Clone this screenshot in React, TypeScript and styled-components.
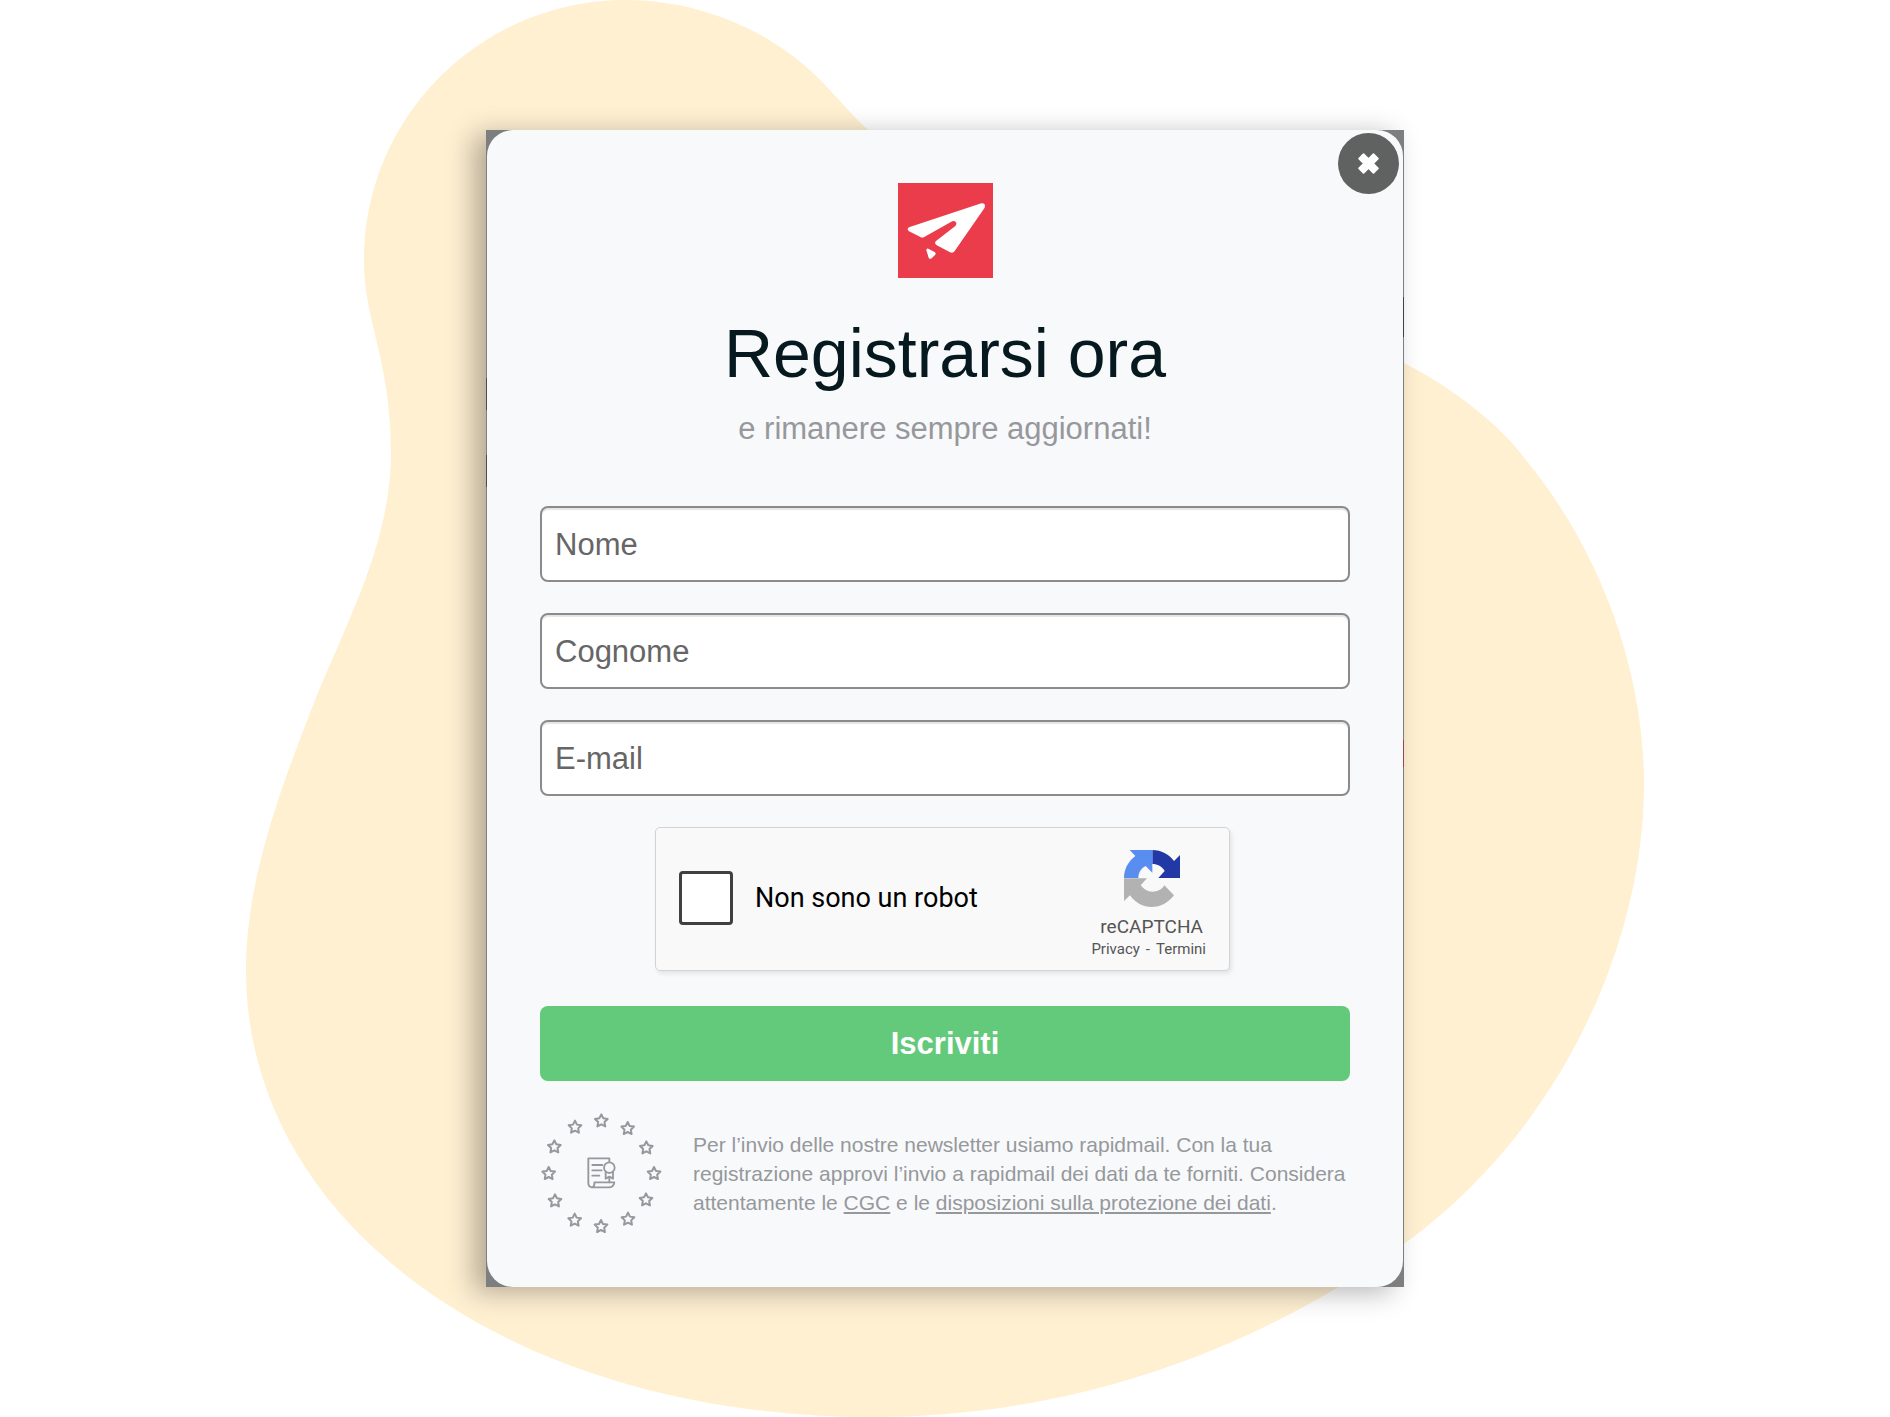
import React from "react";
import styled, { createGlobalStyle } from "styled-components";

const sans = '"Liberation Sans", Arial, Helvetica, sans-serif';
const roboto = 'Roboto, "Liberation Sans", sans-serif';
const muted = "#96989b";

const GlobalStyle = createGlobalStyle`
  *, *::before, *::after { box-sizing: border-box; }
  body { margin: 0; background: #ffffff; font-family: ${sans}; }
`;

const Page = styled.main`
  position: relative;
  display: flex;
  align-items: center;
  justify-content: center;
  min-height: 100vh;
  padding: 24px;
  overflow: hidden;
`;

const Backdrop = styled.svg`
  position: absolute;
  inset: 0;
  width: 100%;
  height: 100%;
`;

const Frame = styled.div`
  position: relative;
  width: 100%;
  max-width: 918px;
  padding: 0 1px;
  background:
    linear-gradient(#3c4245, #3c4245) right 0 top 167px / 1px 40px no-repeat,
    linear-gradient(#9a4650, #9a4650) right 0 top 610px / 1px 27px no-repeat,
    linear-gradient(#4a4c4e, #4a4c4e) left 0 top 248px / 1px 32px no-repeat,
    linear-gradient(#4a4c4e, #4a4c4e) left 0 top 325px / 1px 32px no-repeat,
    #7c7e80;
  box-shadow: -12px 5px 26px rgba(0, 0, 0, 0.3);
`;

const Card = styled.section`
  position: relative;
  display: flex;
  flex-direction: column;
  align-items: center;
  padding: 53px 53px 52px;
  border-radius: 26px;
  background: #f8f9fb;
`;

const CloseButton = styled.button`
  position: absolute;
  top: 3px;
  right: 4px;
  display: flex;
  align-items: center;
  justify-content: center;
  width: 61px;
  height: 61px;
  padding: 0 0 1px;
  border: 0;
  border-radius: 50%;
  background: #606261;
  cursor: pointer;
`;

const Logo = styled.svg`
  width: 95px;
  height: 95px;
`;

const Title = styled.h1`
  margin: 35px 0 0;
  color: #05191e;
  font-size: 68px;
  font-weight: 400;
  line-height: 80px;
  text-align: center;
`;

const Subtitle = styled.p`
  margin: 16px 0 0;
  color: ${muted};
  font-size: 31px;
  line-height: 40px;
  text-align: center;
`;

const Form = styled.form`
  display: flex;
  flex-direction: column;
  gap: 31px;
  width: 100%;
  margin-top: 57px;
`;

const Field = styled.input`
  width: 100%;
  height: 76px;
  padding: 2px 13px 0;
  border: 2px solid #8b8b8b;
  border-radius: 8px;
  background: #ffffff;
  box-shadow: inset 0 2px 1px rgba(0, 0, 0, 0.1);
  color: #333333;
  font-family: ${sans};
  font-size: 31px;
  outline: none;

  &::placeholder {
    color: #666666;
    opacity: 1;
  }
`;

const CaptchaSlot = styled.div`
  width: 100%;
  max-width: 580px;
  margin: 0 auto 4px;
  padding-right: 5px;
`;

const Captcha = styled.div`
  display: flex;
  align-items: center;
  justify-content: space-between;
  height: 144px;
  padding: 0 17px 0 23px;
  border: 1px solid #d3d3d3;
  border-radius: 5px;
  background: #f9f9f9;
  box-shadow: 2px 3px 4px rgba(0, 0, 0, 0.08);
  font-family: ${roboto};
`;

const CaptchaLabel = styled.label`
  display: flex;
  align-items: center;
  gap: 22px;
  padding-bottom: 3px;
  color: #000000;
  font-size: 27px;
  line-height: 32px;
`;

const CaptchaCheck = styled.input`
  appearance: none;
  flex: none;
  width: 54px;
  height: 54px;
  margin: 0;
  border: 3px solid #3f4042;
  border-radius: 4px;
  background: #ffffff;
`;

const CaptchaBrand = styled.div`
  display: flex;
  flex-direction: column;
  align-items: center;
  padding-top: 11px;
  color: #555555;
`;

const CaptchaMark = styled.svg`
  width: 56px;
  height: 57px;
`;

const CaptchaName = styled.span`
  margin-top: 8px;
  font-size: 19px;
  line-height: 24px;
`;

const CaptchaLinks = styled.nav`
  display: flex;
  gap: 6px;
  padding-right: 6px;
  font-size: 15px;
  line-height: 20px;

  a {
    color: inherit;
    text-decoration: none;
  }
`;

const Submit = styled.button`
  width: 100%;
  height: 75px;
  padding: 1px 0 0;
  border: 0;
  border-radius: 8px;
  background: #62ca7a;
  color: #ffffff;
  font-family: ${sans};
  font-size: 31px;
  font-weight: 700;
  cursor: pointer;
`;

const Legal = styled.footer`
  display: flex;
  align-items: center;
  gap: 30px;
  width: 100%;
`;

const Seal = styled.svg`
  flex: none;
  width: 123px;
  height: 123px;
`;

const LegalText = styled.p`
  margin: 0;
  color: ${muted};
  font-size: 21px;
  line-height: 29px;

  a {
    color: inherit;
    text-decoration: underline;
  }
`;

const starCentres = [
  [184, 27], [263, 50], [319, 108], [342, 185], [318, 264], [264, 322],
  [183, 344], [104, 325], [45, 267], [26, 185], [43, 105], [105, 46],
];

const starPath =
  Array.from({ length: 10 }, (_, i) => {
    const r = i % 2 === 0 ? 20 : 10;
    const a = (Math.PI / 5) * i - Math.PI / 2;
    return `${i === 0 ? "M" : "L"}${(r * Math.cos(a)).toFixed(1)} ${(r * Math.sin(a)).toFixed(1)}`;
  }).join(" ") + "Z";

const fields = [
  { name: "nome", label: "Nome", type: "text" },
  { name: "cognome", label: "Cognome", type: "text" },
  { name: "email", label: "E-mail", type: "email" },
];

export default function App() {
  return (
    <>
      <GlobalStyle />
      <Page>
        <Backdrop viewBox="0 0 1890 1417" aria-hidden="true">
          <path
            fill="#fff0d2"
            d="M626 0C700 0 775 31 826 86C842 103 855 118 868 130C1000 250 1200 245 1404 363C1455 389 1500 425 1526 460C1600 550 1644 670 1644 784C1644 950 1555 1135 1404 1244C1270 1340 1090 1417 872 1417C520 1417 246 1230 246 970C246 880 280 790 315 700C350 615 391 540 391 452C391 360 364 322 364 261C364 116 481 0 626 0Z"
          />
        </Backdrop>
        <Frame>
          <Card>
            <CloseButton type="button" aria-label="Chiudi">
              <svg width="21" height="21" viewBox="0 0 19 19" aria-hidden="true">
                <path
                  d="M5 1L9.5 5.5L14 1L18 5L13.5 9.5L18 14L14 18L9.5 13.5L5 18L1 14L5.5 9.5L1 5Z"
                  fill="#fff"
                  stroke="#fff"
                  strokeWidth="1.6"
                  strokeLinejoin="round"
                />
              </svg>
            </CloseButton>

            <Logo viewBox="0 0 285 285" aria-hidden="true">
              <rect width="285" height="285" fill="#ea3c4b" />
              <path
                fill="#fff"
                d="M33 133L250 61Q264 60 260 74L170 204Q165 212 156 208L115 186Q108 180 114 174L172 129Q178 122 173 117Q168 112 160 116L80 161Q73 166 66 161L33 145Q25 138 33 133Z"
              />
              <path fill="#fff" d="M91 197L111 208Q115 212 111 216L101 226Q95 230 92 224L85 202Q85 194 91 197Z" />
            </Logo>

            <Title>Registrarsi ora</Title>
            <Subtitle>e rimanere sempre aggiornati!</Subtitle>

            <Form onSubmit={(e) => e.preventDefault()}>
              {fields.map((f) => (
                <Field key={f.name} name={f.name} type={f.type} placeholder={f.label} aria-label={f.label} />
              ))}

              <CaptchaSlot>
                <Captcha>
                  <CaptchaLabel htmlFor="robot">
                    <CaptchaCheck id="robot" type="checkbox" />
                    Non sono un robot
                  </CaptchaLabel>
                  <CaptchaBrand>
                    <CaptchaMark viewBox="0 0 168 171" aria-hidden="true">
                      <path fill="#2238a4" d="M85 0C112 0 134 12 150 33L168 15V84H103L122 63C114 49 101 42 85 42Z" />
                      <path fill="#5a8df0" d="M17 0H85V68L65 48C51 55 43 68 43 84H0C0 58 12 35 34 18Z" />
                      <path
                        fill="#b2b2b2"
                        d="M0 85H69L50 106C60 119 71 125 85 125C100 125 114 119 121 106L150 136C132 159 110 171 83 171C57 171 34 159 18 136L0 153Z"
                      />
                    </CaptchaMark>
                    <CaptchaName>reCAPTCHA</CaptchaName>
                    <CaptchaLinks>
                      <a href="#privacy">Privacy</a>
                      <span>-</span>
                      <a href="#termini">Termini</a>
                    </CaptchaLinks>
                  </CaptchaBrand>
                </Captcha>
              </CaptchaSlot>

              <Submit type="submit">Iscriviti</Submit>

              <Legal>
                <Seal viewBox="0 0 369 369" fill="none" stroke={muted} strokeWidth="6" aria-hidden="true">
                  {starCentres.map(([x, y]) => (
                    <path key={`${x}-${y}`} d={starPath} transform={`translate(${x} ${y})`} strokeLinejoin="round" />
                  ))}
                  <g strokeWidth="5.5" strokeLinecap="round" strokeLinejoin="round">
                    <path d="M208 148V139H145V214Q145 226 157 226H206Q221 226 223 211H163V217Q162 226 154 226" />
                    <path d="M157 159H187M157 175H185M157 191H178" />
                    <circle cx="208" cy="167" r="16" />
                    <path d="M197 180V200L208 194L219 200V180M208 200V211" />
                  </g>
                </Seal>
                <LegalText>
                  Per l’invio delle nostre newsletter usiamo rapidmail. Con la tua registrazione approvi l’invio a
                  rapidmail dei dati da te forniti. Considera attentamente le <a href="#cgc">CGC</a> e le{" "}
                  <a href="#dati">disposizioni sulla protezione dei dati</a>.
                </LegalText>
              </Legal>
            </Form>
          </Card>
        </Frame>
      </Page>
    </>
  );
}
